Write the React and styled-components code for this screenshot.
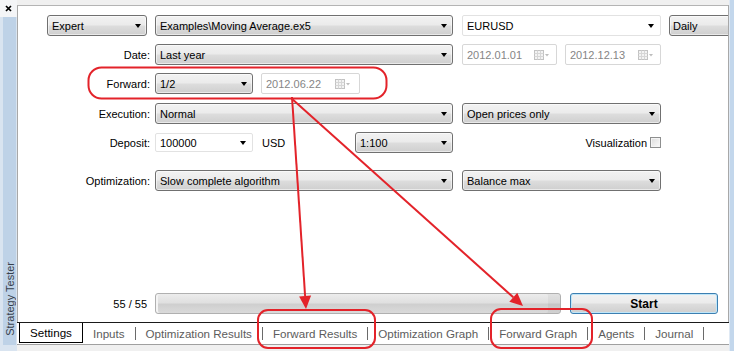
import React from 'react';
import styled, { createGlobalStyle } from 'styled-components';

const Global = createGlobalStyle`
  html, body { margin: 0; padding: 0; }
  body {
    width: 734px; height: 351px; overflow: hidden;
    background: #f0f0f0;
    font-family: "Liberation Sans", Arial, sans-serif;
  }
`;

const Window = styled.div`
  position: relative;
  width: 734px;
  height: 351px;
  display: flex;
  background: #f0f0f0;
  overflow: hidden;
`;

/* ---------- left docked sidebar ---------- */
const Sidebar = styled.div`
  width: 17px;
  flex: none;
  display: flex;
  flex-direction: column;
`;
const CloseBox = styled.div`
  height: 17px;
  flex: none;
  display: flex;
  align-items: center;
  justify-content: center;
  background: #f4f5f7;
  padding-right: 1px;
`;
const SideBody = styled.div`
  flex: 1;
  display: flex;
  background: #d9e4f0;
  padding: 0 1px 6px 3px;
`;
const SideStrip = styled.div`
  flex: 1;
  background: #bed2e7;
  display: flex;
  align-items: flex-end;
  justify-content: center;
  padding-bottom: 9px;
`;
const SideLabel = styled.span`
  writing-mode: vertical-rl;
  transform: rotate(180deg);
  font-size: 11px;
  color: #37414d;
  white-space: nowrap;
`;

/* ---------- main column ---------- */
const Main = styled.div`
  width: 712px;
  flex: none;
  display: flex;
  flex-direction: column;
`;
const TopBand = styled.div`
  height: 5px;
  flex: none;
  background: #f0f0f0;
`;
const Panel = styled.div`
  height: 317px;
  flex: none;
  background: #fff;
  border-top: 1px solid #b4b4b4;
  border-left: 1px solid #a8a8a8;
  border-right: 1px solid #a8a8a8;
  display: flex;
  flex-direction: column;
  padding: 9px 0 8px;
  box-sizing: border-box;
  overflow: hidden;
`;
const RightStrip = styled.div`
  flex: 1;
  background: #c3d7ec;
  border-left: 1px solid #dfe9f4;
`;

const Row = styled.div`
  display: grid;
  grid-template-columns: 137px 307px 207px 1fr;
  height: 21px;
  margin-top: ${p => p.$mt || 0}px;
  align-items: center;
  font-size: 11px;
  color: #000;
`;
const Cell = styled.div`
  display: flex;
  align-items: center;
  justify-content: ${p => (p.$end ? 'flex-end' : 'flex-start')};
  padding-right: ${p => p.$pr || 0}px;
  height: 100%;
  min-width: 0;
`;
const LabelText = styled.span`
  white-space: nowrap;
`;

const ComboBox = styled.div`
  width: ${p => p.$w}px;
  height: 21px;
  box-sizing: border-box;
  flex: none;
  border: 1px solid #707070;
  border-radius: 3px;
  background: linear-gradient(#f2f2f2 0%, #ebebeb 48%, #dddddd 52%, #cfcfcf 100%);
  box-shadow: inset 0 0 0 1px rgba(255,255,255,0.55);
  display: flex;
  align-items: center;
  padding: 0 5px 0 ${p => p.$pl || 4}px;
  white-space: nowrap;
`;
const EditCombo = styled.div`
  width: ${p => p.$w}px;
  height: ${p => p.$h || 21}px;
  box-sizing: border-box;
  flex: none;
  border: 1px solid #e2e2e2;
  border-radius: 2px;
  background: #fff;
  display: flex;
  align-items: center;
  padding: 0 6px 0 4px;
  white-space: nowrap;
`;
const ComboText = styled.span`
  flex: 1;
  overflow: hidden;
`;
const Arrow = styled.span`
  width: 0;
  height: 0;
  border-left: 3.5px solid transparent;
  border-right: 3.5px solid transparent;
  border-top: 4px solid #000;
  flex: none;
`;

const DateBox = styled.div`
  width: ${p => p.$w}px;
  height: 21px;
  box-sizing: border-box;
  flex: none;
  border: 1px solid #d7d7d7;
  border-radius: 2px;
  background: #fff;
  color: #858585;
  display: flex;
  align-items: center;
  gap: 2px;
  padding: 0 ${p => p.$pr || 7}px 0 4px;
  margin-left: ${p => p.$ml || 0}px;
`;

const Unit = styled.span`
  margin-left: 9px;
`;
const Spacer = styled.div`
  flex: 1;
`;
const Check = styled.span`
  width: 11px;
  height: 11px;
  box-sizing: border-box;
  border: 1px solid #8e8f8f;
  background: linear-gradient(135deg, #dcdcdc, #fbfbfb);
  box-shadow: inset 0 0 0 1px #f4f4f4;
  margin-left: 3px;
  flex: none;
`;

const BottomRow = styled(Row)`
  margin-top: auto;
  grid-template-columns: 137px 415px 1fr;
`;
const Progress = styled.div`
  width: 406px;
  height: 21px;
  box-sizing: border-box;
  border: 1px solid #b0b0b0;
  border-radius: 3px;
  background: linear-gradient(#ececec 0%, #e0e0e0 45%, #cfcfcf 55%, #dadada 100%);
  box-shadow: inset 2px 0 0 #f4f4f4, inset -12px 0 0 rgba(0,0,0,0.04);
`;
const StartButton = styled.button`
  width: 148px;
  height: 21px;
  box-sizing: border-box;
  border: 1px solid #3c7fb1;
  border-radius: 3px;
  background: linear-gradient(#f2f2f2 0%, #ebebeb 48%, #dddddd 52%, #cfcfcf 100%);
  box-shadow: inset 0 0 0 1px #bfe6f9;
  font-family: "Liberation Sans", Arial, sans-serif;
  font-size: 12px;
  font-weight: bold;
  color: #000;
  padding: 0;
`;

/* ---------- tab strip ---------- */
const TabStrip = styled.div`
  height: 23px;
  flex: none;
  box-sizing: border-box;
  border-top: 1px solid #1a1a1a;
  border-bottom: 1px solid #a0a0a0;
  background: #fff;
  display: flex;
  align-items: flex-start;
  padding-left: 2px;
  font-size: 11.6px;
  color: #5c5c5c;
`;
const ActiveTab = styled.div`
  width: 64px;
  height: 20px;
  box-sizing: border-box;
  border: 1px solid #000;
  border-top: none;
  background: #fff;
  color: #000;
  padding-left: 10px;
  display: flex;
  align-items: center;
  margin-right: 10px;
  flex: none;
`;
const Tab = styled.div`
  height: 21px;
  display: flex;
  align-items: center;
  white-space: nowrap;
`;
const TabSep = styled.span`
  width: 1px;
  height: 13px;
  background: #6a6a6a;
  margin: 4px 10px 0;
  align-self: flex-start;
  flex: none;
`;
const BottomBand = styled.div`
  flex: 1;
  background: #f0f0f0;
`;

const Overlay = styled.svg`
  position: absolute;
  left: 0;
  top: 0;
  pointer-events: none;
`;

function CalendarIcon() {
  return (
    <svg width="15" height="10" viewBox="0 0 15 10" style={{ flex: 'none' }}>
      <rect x="0.5" y="0.5" width="9" height="9" fill="#f3f3f3" stroke="#c2c2c2" />
      <path d="M0.5 3.5h9M0.5 6.5h9M3.5 0.5v9M6.5 0.5v9" stroke="#d6d6d6" strokeWidth="1" />
      <path d="M11 4h4l-2 2.5z" fill="#bdbdbd" />
    </svg>
  );
}

function Combo({ w, children, pl }) {
  return (
    <ComboBox $w={w} $pl={pl}>
      <ComboText>{children}</ComboText>
      <Arrow />
    </ComboBox>
  );
}

function Edit({ w, h, children }) {
  return (
    <EditCombo $w={w} $h={h}>
      <ComboText>{children}</ComboText>
      <Arrow />
    </EditCombo>
  );
}

function DateField({ w, value, pr, ml }) {
  return (
    <DateBox $w={w} $pr={pr} $ml={ml}>
      <ComboText>{value}</ComboText>
      <CalendarIcon />
    </DateBox>
  );
}

const tabs = ['Inputs', 'Optimization Results', 'Forward Results', 'Optimization Graph', 'Forward Graph', 'Agents', 'Journal'];

export default function App() {
  const red = '#e3232a';
  return (
    <Window>
      <Global />
      <Sidebar>
        <CloseBox>
          <svg width="7" height="7" viewBox="0 0 7 7">
            <path d="M1 1L6 6M6 1L1 6" stroke="#000" strokeWidth="1.7" />
          </svg>
        </CloseBox>
        <SideBody>
          <SideStrip>
            <SideLabel>Strategy Tester</SideLabel>
          </SideStrip>
        </SideBody>
      </Sidebar>

      <Main>
        <TopBand />
        <Panel>
          <Row>
            <Cell $end $pr={8}>
              <Combo w={100}>Expert</Combo>
            </Cell>
            <Cell><Combo w={298}>Examples\Moving Average.ex5</Combo></Cell>
            <Cell><Edit w={199}>EURUSD</Edit></Cell>
            <Cell><Combo w={80} pl={3}>Daily</Combo></Cell>
          </Row>

          <Row $mt={8}>
            <Cell $end $pr={5}><LabelText>Date:</LabelText></Cell>
            <Cell><Combo w={298}>Last year</Combo></Cell>
            <Cell>
              <DateField w={95} value="2012.01.01" />
              <DateField w={96} value="2012.12.13" ml={8} />
            </Cell>
            <Cell />
          </Row>

          <Row $mt={8}>
            <Cell $end $pr={5}><LabelText>Forward:</LabelText></Cell>
            <Cell>
              <Combo w={98}>1/2</Combo>
              <DateField w={99} value="2012.06.22" pr={9} ml={8} />
            </Cell>
            <Cell />
            <Cell />
          </Row>

          <Row $mt={9}>
            <Cell $end $pr={5}><LabelText>Execution:</LabelText></Cell>
            <Cell><Combo w={298}>Normal</Combo></Cell>
            <Cell><Combo w={199}>Open prices only</Combo></Cell>
            <Cell />
          </Row>

          <Row $mt={8}>
            <Cell $end $pr={5}><LabelText>Deposit:</LabelText></Cell>
            <Cell $pr={9}>
              <Edit w={98} h={19}>100000</Edit>
              <Unit>USD</Unit>
              <Spacer />
              <Combo w={98}>1:100</Combo>
            </Cell>
            <Cell $end $pr={8}>
              <LabelText>Visualization</LabelText>
              <Check />
            </Cell>
            <Cell />
          </Row>

          <Row $mt={17}>
            <Cell $end $pr={5}><LabelText>Optimization:</LabelText></Cell>
            <Cell><Combo w={298}>Slow complete algorithm</Combo></Cell>
            <Cell><Combo w={199}>Balance max</Combo></Cell>
            <Cell />
          </Row>

          <BottomRow>
            <Cell $end $pr={8}><LabelText>55 / 55</LabelText></Cell>
            <Cell><Progress /></Cell>
            <Cell><StartButton>Start</StartButton></Cell>
          </BottomRow>
        </Panel>

        <TabStrip>
          <ActiveTab>Settings</ActiveTab>
          {tabs.map(t => (
            <React.Fragment key={t}>
              <Tab>{t}</Tab>
              <TabSep />
            </React.Fragment>
          ))}
        </TabStrip>
        <BottomBand />
      </Main>
      <RightStrip />

      <Overlay width="734" height="351" viewBox="0 0 734 351">
        <g fill="none" stroke={red} strokeWidth="2">
          <rect x="88.5" y="67.5" width="298" height="31" rx="13" />
          <rect x="258" y="310" width="117" height="38" rx="10" />
          <rect x="491" y="309" width="101" height="39" rx="10" />
          <line x1="292" y1="97" x2="305.1" y2="296" />
          <line x1="291" y1="98" x2="513.3" y2="297.3" />
        </g>
        <g fill={red}>
          <polygon points="306,309 311.1,295.6 299.1,296.4" />
          <polygon points="523,306 509.3,301.8 517.3,292.8" />
        </g>
      </Overlay>
    </Window>
  );
}
